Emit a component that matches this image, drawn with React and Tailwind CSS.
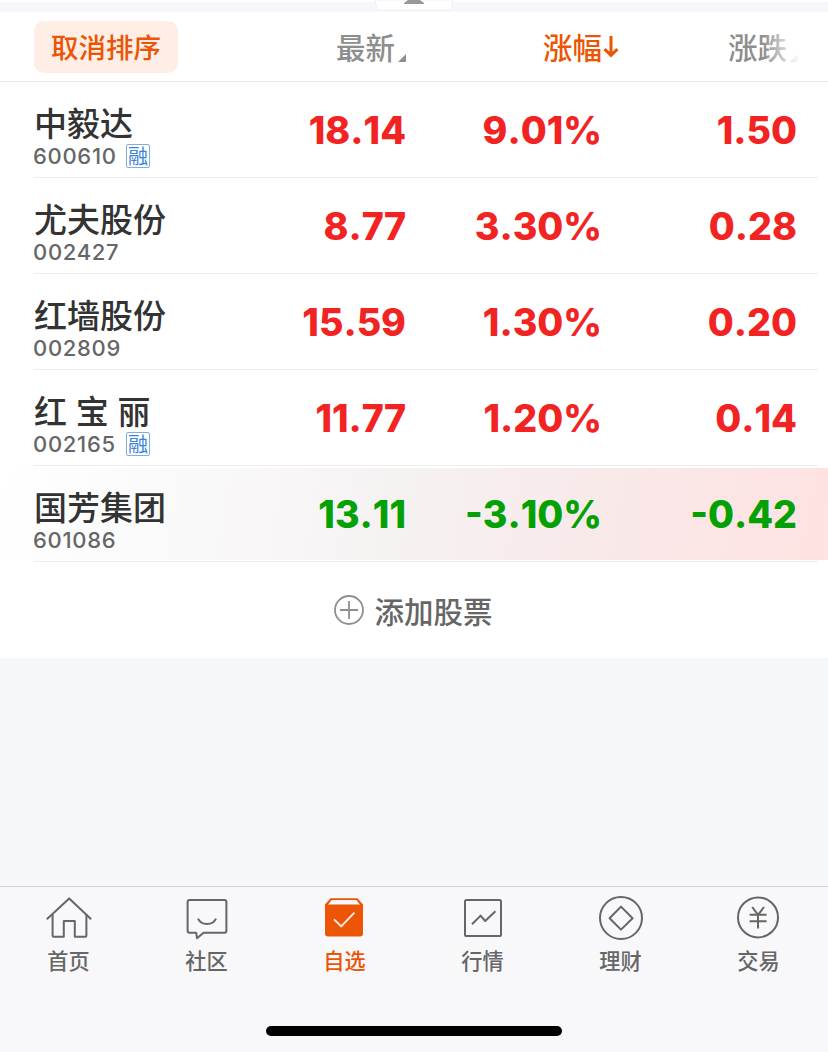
import clsx from "clsx";

const stocks = [
  { name: "中毅达", code: "600610", margin: true, price: "18.14", percent: "9.01%", change: "1.50" },
  { name: "尤夫股份", code: "002427", price: "8.77", percent: "3.30%", change: "0.28" },
  { name: "红墙股份", code: "002809", price: "15.59", percent: "1.30%", change: "0.20" },
  { name: "红 宝 丽", code: "002165", margin: true, price: "11.77", percent: "1.20%", change: "0.14" },
  { name: "国芳集团", code: "601086", price: "13.11", percent: "-3.10%", change: "-0.42", highlight: true },
];

const tabs = [
  { label: "首页", icon: HomeIcon },
  { label: "社区", icon: CommunityIcon },
  { label: "自选", icon: WatchlistIcon, active: true },
  { label: "行情", icon: MarketIcon },
  { label: "理财", icon: WealthIcon },
  { label: "交易", icon: TradeIcon },
];

function TabSvg({ children }) {
  return (
    <svg
      viewBox="0 0 48 48"
      className="w-12 h-12"
      fill="none"
      stroke="currentColor"
      strokeWidth="2"
      strokeLinejoin="round"
    >
      {children}
    </svg>
  );
}

function HomeIcon() {
  return (
    <TabSvg>
      <path d="M1.8 25.2 24.2 4.4 46.2 25.2" />
      <path d="M7.6 20.2V41.8q0 1 1 1H18.8V27H29.8V42.8H40.4q1 0 1-1V20.2" />
    </TabSvg>
  );
}

function CommunityIcon() {
  return (
    <TabSvg>
      <path d="M6.6 6H41.4q2 0 2 2V36.8q0 2-2 2H20.6L14 44.2 13.2 38.8H6.6q-2 0-2-2V8q0-2 2-2Z" />
      <path d="M15 24.6Q17.6 30 24 30T33 24.6" />
    </TabSvg>
  );
}

function WatchlistIcon() {
  return (
    <TabSvg>
      <path d="M9.6 4.2H36.4L42 10.4V39.6q0 3-3 3H7q-3 0-3-3V10.4Z" fill="currentColor" stroke="none" />
      <path d="M10.8 6H35.2L39 10.6H7Z" fill="#f8f8fb" stroke="none" />
      <path d="M13 25.4 20.2 32.4 33.4 18.6" stroke="#fdebe1" />
    </TabSvg>
  );
}

function MarketIcon() {
  return (
    <TabSvg>
      <rect x="6" y="6" width="36" height="36" rx="1.6" />
      <path d="M13 30.2 21.6 21.6 26.2 27 36.4 17.2" />
    </TabSvg>
  );
}

function WealthIcon() {
  return (
    <TabSvg>
      <circle cx="24" cy="24" r="21" />
      <path d="M24 12.6 35.6 24.2 24 35.6 12.6 24.2Z" />
    </TabSvg>
  );
}

function TradeIcon() {
  return (
    <TabSvg>
      <circle cx="23" cy="23.4" r="20" />
      <path d="M17.2 13 23 20.8 29 13M14.6 20.8H31.6M14.6 27.2H31.6M23 20.8V34.6" />
    </TabSvg>
  );
}

function SortCorner() {
  return (
    <svg viewBox="0 0 8 8" className="w-2 h-2 mb-2 ml-[3px]" fill="#8e8e98">
      <path d="M8 0V8H0Z" />
    </svg>
  );
}

function StockRow({ stock }) {
  const color = stock.change.startsWith("-") ? "text-[#04a104]" : "text-[#f22323]";
  return (
    <div className="h-24 flex flex-col">
      <div
        className={clsx(
          "h-[92px] mt-[2px] mb-px pl-[33px] pr-[31px] flex shrink-0",
          stock.highlight &&
            "bg-[linear-gradient(100deg,#ffffff_0%,#f8f6f7_35%,#f6f1f1_50%,#f9e8e8_75%,#ffe2e2_100%)]"
        )}
      >
        <div className="w-[190px] pt-[18px]">
          <div className="h-[42px] pl-px text-[33px] leading-[44px] font-medium text-[#333] whitespace-pre">
            {stock.name}
          </div>
          <div className="h-6 flex items-center">
            <span className="w-[93px] text-[22px] leading-6 font-medium tracking-[0.7px] text-[#666]">
              {stock.code}
            </span>
            {stock.margin && (
              <span className="w-6 h-6 border border-[#80aee0] rounded-[2px] text-[20px] leading-[24px] text-[#3b82d8] flex justify-center">
                融
              </span>
            )}
          </div>
        </div>
        <div
          className={clsx(
            "flex pt-6 text-[37.6px] leading-[46px] font-extrabold [font-kerning:none]",
            color
          )}
        >
          <div className="w-[183px] text-right">{stock.price}</div>
          <div className="w-[196px] text-right">{stock.percent}</div>
          <div className="w-[195px] text-right">{stock.change}</div>
        </div>
      </div>
      <div className="h-px ml-[33px] mr-[10px] bg-[#ededed]" />
    </div>
  );
}

export default function App() {
  return (
    <div className="w-[828px] h-[1052px] flex flex-col overflow-hidden bg-white font-['Inter','Noto_Sans_CJK_SC',sans-serif]">
      {/* drawer handle */}
      <div className="h-3 pt-[2px] shrink-0">
        <div className="h-[10px] bg-[#f6f7fa] flex justify-center">
          <svg viewBox="0 0 80 12" className="w-20 h-3 -mt-[2px]">
            <path d="M1 0H79L77 10H3Z" fill="#fff" stroke="#f0f1f4" strokeWidth="1" />
            <path d="M30 4V3L34 0H46L50 3V4Z" fill="#999" />
          </svg>
        </div>
      </div>

      {/* column header */}
      <div className="h-[70px] shrink-0 border-b border-[#e9e9e9] pl-[34px] flex items-start">
        <button className="w-36 h-[52px] mt-[9px] pt-[3px] rounded-[10px] bg-[#ffeee6] text-[27.5px] font-medium text-[#eb5505]">
          取消排序
        </button>
        <div className="h-[70px] pt-px flex items-center text-[29.5px] font-medium text-[#8e8e8e]">
          <div className="w-[228px] h-11 flex items-end justify-end leading-[44px]">
            最新
            <SortCorner />
          </div>
          <div className="w-[213px] h-11 flex items-center justify-end leading-[44px] text-[#eb5505]">
            <span className="mr-px">涨幅</span>
            <svg
              viewBox="0 0 16 24"
              className="w-4 h-6 mb-px"
              fill="none"
              stroke="currentColor"
              strokeWidth="3"
            >
              <path d="M8 1V20M1.6 14.2 8 20.4 14.4 14.2" />
            </svg>
          </div>
          <div className="relative w-[179px] h-11 flex items-end justify-end leading-[44px]">
            涨跌
            <SortCorner />
            <div className="absolute right-0 top-0 w-9 h-11 bg-linear-to-r from-white/0 to-white/95" />
          </div>
        </div>
      </div>

      {/* stock list */}
      <div className="shrink-0">
        {stocks.map((stock) => (
          <StockRow key={stock.code} stock={stock} />
        ))}
      </div>

      <button className="h-24 pr-px shrink-0 flex items-center justify-center gap-[10px] text-[29.5px] font-medium text-[#666]">
        <svg viewBox="0 0 30 30" className="w-[30px] h-[30px]" fill="none" stroke="#8e8e93" strokeWidth="1.8">
          <circle cx="15" cy="15" r="14" />
          <path d="M15 6V24M6 15H24" />
        </svg>
        <span className="pt-1">添加股票</span>
      </button>

      <div className="flex-1 bg-[#f6f7fa]" />

      {/* tab bar */}
      <div className="h-[166px] shrink-0 border-t border-[#d5d5d9] bg-[#f8f8fb] flex flex-col items-center">
        <div className="w-full h-[139px] pt-[7px] grid grid-cols-6">
          {tabs.map(({ label, icon: Icon, active }) => (
            <div
              key={label}
              className={clsx("flex flex-col items-center", active ? "text-[#eb5505]" : "text-[#666]")}
            >
              <Icon />
              <span className="mt-1 pr-px text-[21.2px] leading-[30px] font-medium">{label}</span>
            </div>
          ))}
        </div>
        <div className="w-[296px] h-[10px] rounded-full bg-black" />
      </div>
    </div>
  );
}
